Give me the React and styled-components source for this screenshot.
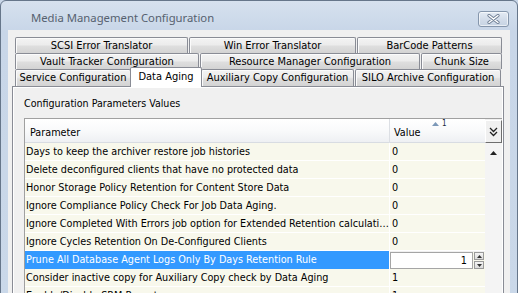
import React from 'react';
import styled, { createGlobalStyle } from 'styled-components';

const Global = createGlobalStyle`
  html, body { margin: 0; padding: 0; background: #c9d7e8; }
  body { width: 518px; height: 293px; overflow: hidden; }
  * { box-sizing: border-box; }
`;

const UI = `"DejaVu Sans Condensed", "DejaVu Sans", sans-serif`;

const Window = styled.div`
  width: 518px;
  height: 310px;
  display: flex;
  flex-direction: column;
  background: linear-gradient(#d6e1ee, #c8d6e8 30px, #cad8e9);
  border: 1px solid #66768a;
  border-radius: 6px 6px 0 0;
  overflow: hidden;
`;

const TitleBar = styled.div`
  height: 28px;
  display: flex;
  align-items: flex-start;
  justify-content: space-between;
  padding: 0 8px 0 30px;
  flex: none;
`;

const Title = styled.div`
  padding-top: 9px;
  font: 11.3px/16px "Segoe UI", "Noto Sans", sans-serif;
  color: #56616f;
`;

const CloseButton = styled.div`
  margin-top: 10px;
  width: 31px;
  height: 16px;
  border: 1px solid #8596ac;
  border-radius: 3px;
  background: linear-gradient(#e4ebf4, #d3ddea 50%, #c6d3e3);
  box-shadow: inset 0 0 0 1px rgba(255,255,255,0.6);
  display: flex;
  align-items: center;
  justify-content: center;
`;

const Client = styled.div`
  flex: 1;
  margin: 1px 7px 0;
  background: #f0f0f0;
  padding: 7px 6px 0 4px;
`;

const TabRows = styled.div`
  display: flex;
  flex-direction: column;
  padding: 0 2px 0 3px;
`;

const TabRow = styled.div`
  display: flex;
  gap: 1px;
  height: ${p => p.$h || 16}px;
  position: relative;
`;

const Tab = styled.div`
  width: ${p => p.$w}px;
  flex: none;
  height: 100%;
  border: 1px solid #898c95;
  border-bottom: none;
  border-radius: 2px 2px 0 0;
  background: linear-gradient(#f3f3f3, #ececec 45%, #dedede 55%, #d3d3d3);
  box-shadow: inset 1px 1px 0 #fbfbfb;
  font: 11px/14px ${UI};
  color: #000;
  text-align: center;
  padding-top: 1px;
  white-space: nowrap;
  overflow: hidden;
`;

const ActiveTab = styled(Tab)`
  margin: -2px -2px -1px;
  width: ${p => p.$w + 4}px;
  height: calc(100% + 3px);
  background: #fff;
  box-shadow: none;
  position: relative;
  z-index: 2;
  padding-top: 2px;
`;

const Panel = styled.div`
  border: 1px solid #898c95;
  background: #f0f0f0;
  box-shadow: inset 0 0 0 1px #fff;
  height: 240px;
  padding: 9px 1px 0 11px;
  display: flex;
  flex-direction: column;
`;

const GroupLabel = styled.div`
  font: 10.6px/14px ${UI};
  color: #000;
  height: 22px;
`;

const Grid = styled.div`
  border-left: 1px solid #a0a0a0;
  border-top: 1px solid #a0a0a0;
  display: flex;
  flex-direction: column;
  font: 10.75px/17px ${UI};
  color: #000;
`;

const HeaderRow = styled.div`
  display: grid;
  grid-template-columns: 364px 1px 95px 17px;
  height: 24px;
`;

const HeaderCell = styled.div`
  background: linear-gradient(#ffffff, #f9fafb 50%, #eef0f3);
  border-bottom: 1px solid #d8dce2;
  padding: 5px 0 0 ${p => p.$pad}px;
  position: relative;
`;

const HeaderSep = styled.div`
  background: #dcdfe4;
`;

const SortMark = styled.div`
  position: absolute;
  top: 0px;
  left: 42px;
  display: flex;
  align-items: center;
  gap: 3px;
  font: 8px/9px ${UI};
  color: #1a2a3a;
`;

const ChooserButton = styled.div`
  background: #f0f0f0;
  border-left: 1px solid #fff;
  border-top: 1px solid #fff;
  border-right: 1px solid #6e6e6e;
  border-bottom: 1px solid #6e6e6e;
  display: flex;
  align-items: center;
  justify-content: center;
  margin-top: 1px;
`;

const Body = styled.div`
  display: grid;
  grid-template-columns: 460px 17px;
`;

const Rows = styled.div`
  display: flex;
  flex-direction: column;
`;

const Row = styled.div`
  display: grid;
  grid-template-columns: 364px 1px 95px;
  height: 18px;
  border-bottom: 1px solid #fff;
`;

const Cell = styled.div`
  background: ${p => (p.$sel ? '#3399ff' : '#f8f8ec')};
  color: ${p => (p.$sel ? '#fff' : '#000')};
  padding-left: ${p => p.$pad}px;
  white-space: nowrap;
  overflow: hidden;
  text-overflow: ellipsis;
`;

const ColSep = styled.div`
  background: #fff;
`;

const EditCell = styled.div`
  background: #f8f8ec;
  display: flex;
  align-items: stretch;
  gap: 1px;
  padding-right: 1px;
  margin-top: 1px;
`;

const EditBox = styled.div`
  flex: 1;
  background: #fff;
  border: 1px solid #a5a5a5;
  text-align: right;
  padding-right: 5px;
  line-height: 15px;
`;

const Spinner = styled.div`
  width: 10px;
  display: flex;
  flex-direction: column;
  gap: 1px;
`;

const SpinButton = styled.div`
  flex: 1;
  background: linear-gradient(#f4f4f4, #dcdcdc);
  border: 1px solid #9a9a9a;
  display: flex;
  align-items: center;
  justify-content: center;
`;

const ScrollTrack = styled.div`
  background: #f4f4f4;
  display: flex;
  justify-content: center;
  padding-top: 8px;
`;

const ROWS = [
  ['Days to keep the archiver restore job histories', '0'],
  ['Delete deconfigured clients that have no protected data', '0'],
  ['Honor Storage Policy Retention for Content Store Data', '0'],
  ['Ignore Compliance Policy Check For Job Data Aging.', '0'],
  ['Ignore Completed With Errors job option for Extended Retention calculation', '0'],
  ['Ignore Cycles Retention On De-Configured Clients', '0'],
  ['Prune All Database Agent Logs Only By Days Retention Rule', '1', true],
  ['Consider inactive copy for Auxiliary Copy check by Data Aging', '1'],
  ['Enable/Disable SRM Reports', '1'],
];

const TAB_ROWS = [
  [['SCSI Error Translator', 173], ['Win Error Translator', 167], ['BarCode Patterns', 145]],
  [['Vault Tracker Configuration', 184], ['Resource Manager Configuration', 220], ['Chunk Size', 81]],
  [['Service Configuration', 116], ['Data Aging', 68, true], ['Auxiliary Copy Configuration', 153], ['SILO Archive Configuration', 146]],
];

const Tri = ({ dir = 'up', color = '#000', w = 7, h = 4 }) => (
  <svg width={w} height={h} viewBox={`0 0 ${w} ${h}`}>
    <polygon
      points={dir === 'up' ? `0,${h} ${w / 2},0 ${w},${h}` : `0,0 ${w / 2},${h} ${w},0`}
      fill={color}
    />
  </svg>
);

export default function App() {
  return (
    <>
      <Global />
      <Window>
        <TitleBar>
          <Title>Media Management Configuration</Title>
          <CloseButton>
            <svg width="13" height="10" viewBox="0 0 13 10">
              <path d="M2 1.5 L11 8.5 M11 1.5 L2 8.5" stroke="#6f7f95" strokeWidth="3.2" strokeLinecap="round" />
              <path d="M2 1.5 L11 8.5 M11 1.5 L2 8.5" stroke="#ffffff" strokeWidth="1.4" strokeLinecap="round" />
            </svg>
          </CloseButton>
        </TitleBar>
        <Client>
          <TabRows>
            {TAB_ROWS.map((row, i) => (
              <TabRow key={i} $h={i === 2 ? 17 : 16}>
                {row.map(([label, w, active]) =>
                  active ? (
                    <ActiveTab key={label} $w={w}>{label}</ActiveTab>
                  ) : (
                    <Tab key={label} $w={w}>{label}</Tab>
                  )
                )}
              </TabRow>
            ))}
          </TabRows>
          <Panel>
            <GroupLabel>Configuration Parameters Values</GroupLabel>
            <Grid>
              <HeaderRow>
                <HeaderCell $pad={5}>Parameter</HeaderCell>
                <HeaderSep />
                <HeaderCell $pad={4}>
                  Value
                  <SortMark>
                    <Tri color="#7c98b8" w={7} h={4} />
                    <span>1</span>
                  </SortMark>
                </HeaderCell>
                <ChooserButton>
                  <svg width="9" height="10" viewBox="0 0 9 10">
                    <path d="M1 1 L4.5 4.5 L8 1 M1 5 L4.5 8.5 L8 5" stroke="#222" strokeWidth="1.3" fill="none" />
                  </svg>
                </ChooserButton>
              </HeaderRow>
              <Body>
                <Rows>
                  {ROWS.map(([name, value, sel]) => (
                    <Row key={name}>
                      <Cell $pad={1} $sel={sel}>{name}</Cell>
                      <ColSep />
                      {sel ? (
                        <EditCell>
                          <EditBox>{value}</EditBox>
                          <Spinner>
                            <SpinButton><Tri w={5} h={3} color="#333" /></SpinButton>
                            <SpinButton><Tri dir="down" w={5} h={3} color="#333" /></SpinButton>
                          </Spinner>
                        </EditCell>
                      ) : (
                        <Cell $pad={2}>{value}</Cell>
                      )}
                    </Row>
                  ))}
                </Rows>
                <ScrollTrack>
                  <Tri w={7} h={4} color="#222" />
                </ScrollTrack>
              </Body>
            </Grid>
          </Panel>
        </Client>
      </Window>
    </>
  );
}
